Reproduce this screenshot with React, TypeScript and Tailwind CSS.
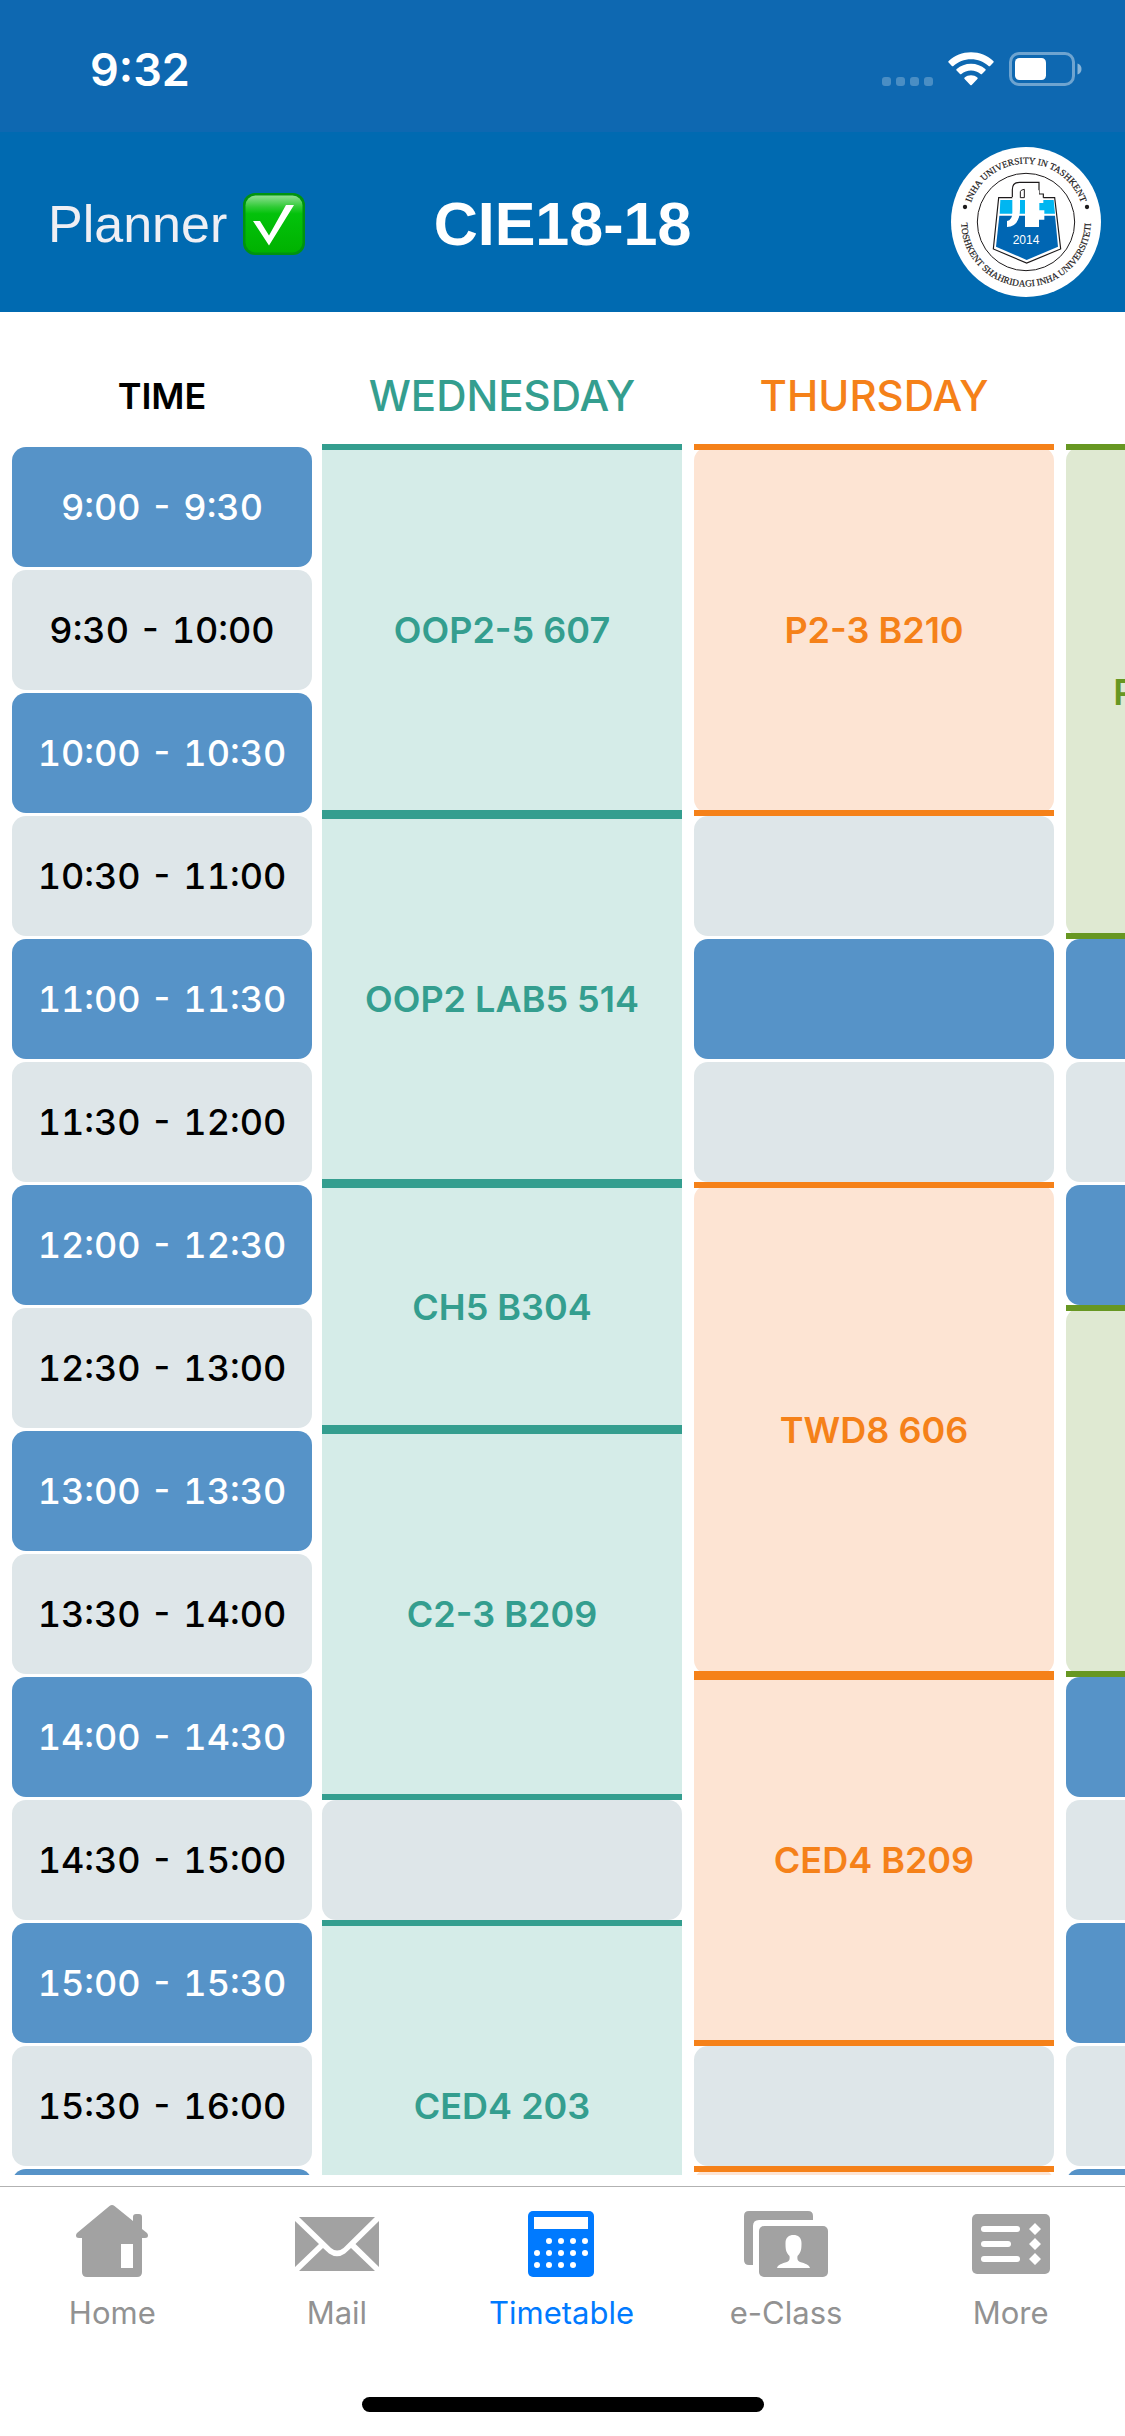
import { useState, type ReactNode } from "react";
import clsx from "clsx";

type Tone = "teal" | "orange" | "green";

type Block = {
  start: number;
  span: number;
  label: string;
  corners: string;
};

type Day = {
  name: string;
  tone: Tone;
  gutter: string;
  blocks: Block[];
};

const TIMES = [
  "9:00 - 9:30",
  "9:30 - 10:00",
  "10:00 - 10:30",
  "10:30 - 11:00",
  "11:00 - 11:30",
  "11:30 - 12:00",
  "12:00 - 12:30",
  "12:30 - 13:00",
  "13:00 - 13:30",
  "13:30 - 14:00",
  "14:00 - 14:30",
  "14:30 - 15:00",
  "15:00 - 15:30",
  "15:30 - 16:00",
  "16:00 - 16:30",
];

const DAYS: Day[] = [
  {
    name: "WEDNESDAY",
    tone: "teal",
    gutter: "pl-[10px]",
    blocks: [
      { start: 0, span: 3, label: "OOP2-5 607", corners: "" },
      { start: 3, span: 3, label: "OOP2 LAB5 514", corners: "" },
      { start: 6, span: 2, label: "CH5 B304", corners: "" },
      { start: 8, span: 3, label: "C2-3 B209", corners: "" },
      { start: 12, span: 3, label: "CED4 203", corners: "" },
    ],
  },
  {
    name: "THURSDAY",
    tone: "orange",
    gutter: "pl-3",
    blocks: [
      { start: 0, span: 3, label: "P2-3 B210", corners: "rounded-[14px]" },
      { start: 6, span: 4, label: "TWD8 606", corners: "rounded-[14px]" },
      { start: 10, span: 3, label: "CED4 B209", corners: "" },
      { start: 14, span: 1, label: "", corners: "rounded-[14px]" },
    ],
  },
  {
    name: "FRIDAY",
    tone: "green",
    gutter: "pl-3",
    blocks: [
      { start: 0, span: 4, label: "P2-3 LAB5 602", corners: "rounded-[14px]" },
      { start: 7, span: 3, label: "", corners: "rounded-[14px]" },
    ],
  },
];

const TONES: Record<Tone, { text: string; fill: string; edges: string }> = {
  teal: {
    text: "text-[#349e8f]",
    fill: "bg-[#d5ece8]",
    edges: "before:bg-[#349e8f] after:bg-[#349e8f]",
  },
  orange: {
    text: "text-[#f58119]",
    fill: "bg-[#fde4d3]",
    edges: "before:bg-[#f58119] after:bg-[#f58119]",
  },
  green: {
    text: "text-[#679722]",
    fill: "bg-[#dfe9d2]",
    edges: "before:bg-[#679722] after:bg-[#679722]",
  },
};

const stripe = (row: number) => (row % 2 === 0 ? "bg-[#5693c8] text-white" : "bg-[#dee6e9] text-black");

function StatusBar() {
  return (
    <div className="flex h-[132px] items-center justify-between bg-[#0e68b1] pl-[90px] pr-[43px] pt-[6px] text-white">
      <span className="text-[45px] font-semibold leading-none">9:32</span>
      <div className="flex items-center gap-[15px]">
        <div className="flex gap-[5px] pt-6">
          {[0, 1, 2, 3].map((dot) => (
            <span key={dot} className="size-[9px] rounded-[3px] bg-white/25" />
          ))}
        </div>
        <svg className="h-[34px] w-[46px]" viewBox="0 0 46 34" fill="currentColor" aria-label="Wi-Fi">
          <path d="M23 0.3C14.4 0.3 6.600 3.600 0.700 8.900 0.200 9.300 0.200 10 0.600 10.500L3.900 13.900C4.300 14.300 5 14.300 5.400 13.900 10.100 9.700 16.200 7.200 23 7.200S35.900 9.700 40.600 13.900C41 14.300 41.700 14.300 42.100 13.900L45.400 10.500C45.800 10 45.800 9.300 45.300 8.900 39.400 3.600 31.600 0.300 23 0.300Z" />
          <path d="M23 11.700C17.500 11.700 12.500 13.700 8.700 17.100 8.200 17.500 8.200 18.200 8.600 18.600L12 22C12.400 22.400 13 22.400 13.400 22 16 19.800 19.300 18.500 23 18.500S30 19.800 32.600 22C33 22.400 33.600 22.400 34 22L37.400 18.600C37.800 18.200 37.800 17.500 37.300 17.100 33.500 13.700 28.500 11.700 23 11.700Z" />
          <path d="M23 23.300C20.600 23.300 18.400 24.100 16.700 25.500 16.200 25.900 16.200 26.600 16.600 27L22.300 33C22.700 33.400 23.300 33.400 23.700 33L29.400 27C29.800 26.600 29.800 25.900 29.300 25.500 27.600 24.100 25.400 23.300 23 23.300Z" />
        </svg>
        <svg className="h-[34px] w-[73px]" viewBox="0 0 73 34" aria-label="Battery">
          <rect x="1.500" y="1.500" width="63" height="31" rx="8.500" fill="none" stroke="#fff" strokeOpacity="0.400" strokeWidth="3" />
          <path d="M68.500 11.500C71 12.200 72.500 14.300 72.500 17S71 21.800 68.500 22.500Z" fill="#fff" fillOpacity="0.500" />
          <rect x="6" y="6" width="31" height="22" rx="4.500" fill="#fff" />
        </svg>
      </div>
    </div>
  );
}

function CheckBadge() {
  return (
    <svg className="size-[62px]" viewBox="0 0 62 62" aria-hidden="true">
      <defs>
        <linearGradient id="badge" x1="0" y1="0" x2="0" y2="1">
          <stop offset="0" stopColor="#8fdf93" />
          <stop offset="0.200" stopColor="#2fcb35" />
          <stop offset="0.320" stopColor="#03c20b" />
          <stop offset="1" stopColor="#00b200" />
        </linearGradient>
      </defs>
      <rect width="62" height="62" rx="12" fill="#00930f" />
      <rect x="2.500" y="2.500" width="57" height="57" rx="10" fill="url(#badge)" />
      <path d="M10 28H17L26 42.500 43 12H51L26 52.500Z" fill="#fff" />
    </svg>
  );
}

function UniversitySeal() {
  return (
    <svg className="size-[150px]" viewBox="0 0 450 450" role="img" aria-label="Inha University in Tashkent">
      <defs>
        <path id="seal-top" d="M50 225A175 175 0 0 1 400 225" />
        <path id="seal-bottom" d="M33.500 190A194.500 194.500 0 1 0 416.500 190" />
      </defs>
      <circle cx="225" cy="225" r="225" fill="#fff" />
      <circle cx="225" cy="225" r="146" fill="none" stroke="#1d1a1b" strokeWidth="3" />
      <g fill="#1d1a1b" stroke="#1d1a1b" strokeWidth="0.600" fontFamily="'Liberation Serif', serif" fontSize="28" textAnchor="middle">
        <text>
          <textPath href="#seal-top" startOffset="50%">INHA UNIVERSITY IN TASHKENT</textPath>
        </text>
        <text>
          <textPath href="#seal-bottom" startOffset="50%">TOSHKENT SHAHRIDAGI INHA UNIVERSITETI</textPath>
        </text>
      </g>
      <circle cx="42" cy="180" r="6.500" fill="#1d1a1b" />
      <circle cx="408" cy="180" r="6.500" fill="#1d1a1b" />
      <path
        d="M143 152H184V128Q184 106 206 106H264V141H277V152H311L329 306 227 348 127 306Z"
        fill="#fff"
        stroke="#1d1a1b"
        strokeWidth="3.500"
      />
      <path d="M148 159H308L312 200H146Z" fill="#00b6f1" />
      <path d="M145 206H312L321 299 227 339 135 299Z" fill="#0066b3" />
      <path d="M184 150H207V182Q208 238 168 240V222Q184 220 184 196Z" fill="#fff" />
      <path d="M222 130H264V152H277V168H265V190H280V218H264V240H222Z" fill="#fff" />
      <path d="M208 152V134Q209 128 220 127V152Z" fill="#fff" stroke="#1d1a1b" strokeWidth="3" />
      <text x="225" y="290" textAnchor="middle" fill="#fff" fontFamily="'Liberation Sans', sans-serif" fontSize="36">
        2014
      </text>
    </svg>
  );
}

function NavBar() {
  return (
    <header className="grid h-[180px] grid-cols-3 items-center bg-[#006ab1] pl-12 pr-6 font-['Liberation_Sans',sans-serif]">
      <button type="button" className="flex items-center gap-4 justify-self-start pt-1 text-[52px] leading-none text-[#efeff4]">
        Planner
        <CheckBadge />
      </button>
      <h1 className="-ml-6 pt-1 text-center text-[61px] font-bold leading-none text-white">CIE18-18</h1>
      <div className="justify-self-end">
        <UniversitySeal />
      </div>
    </header>
  );
}

function DayCell({ day, row }: { day: Day; row: number }) {
  const block = day.blocks.find((item) => row >= item.start && row < item.start + item.span);
  if (!block) {
    return (
      <td className={clsx("h-[120px] p-0", day.gutter)}>
        <div className={clsx("h-full rounded-[14px]", stripe(row))} />
      </td>
    );
  }
  if (block.start !== row) return null;
  const tone = TONES[day.tone];
  return (
    <td rowSpan={block.span} className={clsx("h-[120px] p-0", day.gutter)}>
      <div
        className={clsx(
          "relative flex h-full items-center justify-center font-semibold",
          "before:absolute before:inset-x-0 before:-top-[3px] before:h-[6px]",
          "after:absolute after:inset-x-0 after:-bottom-[3px] after:h-[6px]",
          tone.text,
          tone.fill,
          tone.edges,
          block.corners,
        )}
      >
        {block.label}
      </div>
    </td>
  );
}

function Timetable() {
  return (
    <main className="min-h-0 flex-1 overflow-auto [scrollbar-width:none]">
      <table className="w-[1426px] table-fixed border-separate border-spacing-x-0 border-spacing-y-[3px] text-[36px] leading-none">
        <colgroup>
          <col className="w-[312px]" />
          <col className="w-[370px]" />
          <col className="w-[372px]" />
          <col className="w-[372px]" />
        </colgroup>
        <thead>
          <tr className="h-[129px]">
            <th scope="col" className="p-0 pl-3 pt-[33px] text-center font-semibold text-black">
              TIME
            </th>
            {DAYS.map((day) => (
              <th
                key={day.name}
                scope="col"
                className={clsx("p-0 pt-[33px] text-center text-[42px] font-medium", day.gutter, TONES[day.tone].text)}
              >
                {day.name}
              </th>
            ))}
          </tr>
        </thead>
        <tbody>
          {TIMES.map((time, row) => (
            <tr key={time} className="h-[120px]">
              <th scope="row" className="h-[120px] p-0 pl-3 font-medium">
                <div className={clsx("flex h-full items-center justify-center rounded-[14px] tabular-nums", stripe(row))}>
                  {time}
                </div>
              </th>
              {DAYS.map((day) => (
                <DayCell key={day.name} day={day} row={row} />
              ))}
            </tr>
          ))}
        </tbody>
      </table>
    </main>
  );
}

function TabIcon({ children }: { children: ReactNode }) {
  return (
    <svg className="h-[72px] w-[84px]" viewBox="0 0 84 72" fill="currentColor" aria-hidden="true">
      {children}
    </svg>
  );
}

const TABS = [
  {
    name: "Home",
    icon: (
      <TabIcon>
        <path
          fillRule="evenodd"
          d="M39.500 1Q42 -1 44.500 1L63 16V12Q63 9 66 9H69Q72 9 72 12V24L77 28Q78 29 78 30.500 78 33 75 33H72V67Q72 72 67 72H17Q12 72 12 67V33H9Q6 33 6 30.500 6 29 7 28ZM51 39V63H63V39Z"
        />
      </TabIcon>
    ),
  },
  {
    name: "Mail",
    icon: (
      <TabIcon>
        <path d="M4 12H80L48.500 43Q42 48 36 43ZM0 16L24 39 0 62ZM84 16V62L60.500 39ZM28 43L34 48.500Q42 54 50 48.500L56 43 80 66H4Z" />
      </TabIcon>
    ),
  },
  {
    name: "Timetable",
    icon: (
      <TabIcon>
        <rect x="9" y="6" width="66" height="66" rx="5" />
        <rect x="15" y="12" width="54" height="12" fill="#fff" />
        <g fill="#fff">
          {[30, 42, 54, 66].map((x) => (
            <circle key={x} cx={x} cy="36" r="3" />
          ))}
          {[18, 30, 42, 54, 66].map((x) => (
            <circle key={x} cx={x} cy="48" r="3" />
          ))}
          {[18, 30, 42, 54].map((x) => (
            <circle key={x} cx={x} cy="60" r="3" />
          ))}
        </g>
      </TabIcon>
    ),
  },
  {
    name: "e-Class",
    icon: (
      <TabIcon>
        <path d="M9 60H5Q0 60 0 55V11Q0 6 5 6H64Q69 6 69 11V15H15Q9 15 9 21Z" />
        <rect x="15" y="21" width="69" height="51" rx="5" />
        <path
          d="M49.500 30C54 30 57.500 32.500 57.500 38 57.500 43 57.500 47 53.500 51 53 54 53.500 56 56 57 61 58.500 65 59.500 66 63H33C34 59.500 38 58.500 43 57 45.500 56 46 54 45.500 51 41.500 47 41.500 43 41.500 38 41.500 32.500 45 30 49.500 30Z"
          fill="#fff"
        />
      </TabIcon>
    ),
  },
  {
    name: "More",
    icon: (
      <TabIcon>
        <rect x="3" y="9" width="78" height="60" rx="5" />
        <g fill="#fff">
          <rect x="12" y="21" width="39" height="6" rx="3" />
          <rect x="12" y="36" width="30" height="6" rx="3" />
          <rect x="12" y="51" width="39" height="6" rx="3" />
          <path d="M66 18L72 24 66 30 60 24ZM66 33L72 39 66 45 60 39ZM66 48L72 54 66 60 60 54Z" />
        </g>
      </TabIcon>
    ),
  },
];

function TabBar() {
  const [active, setActive] = useState("Timetable");
  return (
    <footer className="mt-[11px] flex h-[250px] flex-col items-center justify-between border-t border-[#b2b2b2] pb-6">
      <nav className="grid w-full grid-cols-5 pr-[2px] pt-[18px]">
        {TABS.map((tab) => (
          <button
            key={tab.name}
            type="button"
            onClick={() => setActive(tab.name)}
            aria-current={active === tab.name ? "page" : undefined}
            className={clsx(
              "flex flex-col items-center gap-[18px] text-[31px] leading-[36px]",
              active === tab.name ? "text-[#007aff]" : "text-[#a2a2a2]",
            )}
          >
            {tab.icon}
            <span className={active === tab.name ? "text-[#007aff]" : "text-[#929292]"}>{tab.name}</span>
          </button>
        ))}
      </nav>
      <div className="h-[15px] w-[402px] rounded-full bg-black" />
    </footer>
  );
}

export default function App() {
  return (
    <div className="flex h-screen flex-col overflow-hidden bg-white font-[Inter,sans-serif]">
      <StatusBar />
      <NavBar />
      <Timetable />
      <TabBar />
    </div>
  );
}
